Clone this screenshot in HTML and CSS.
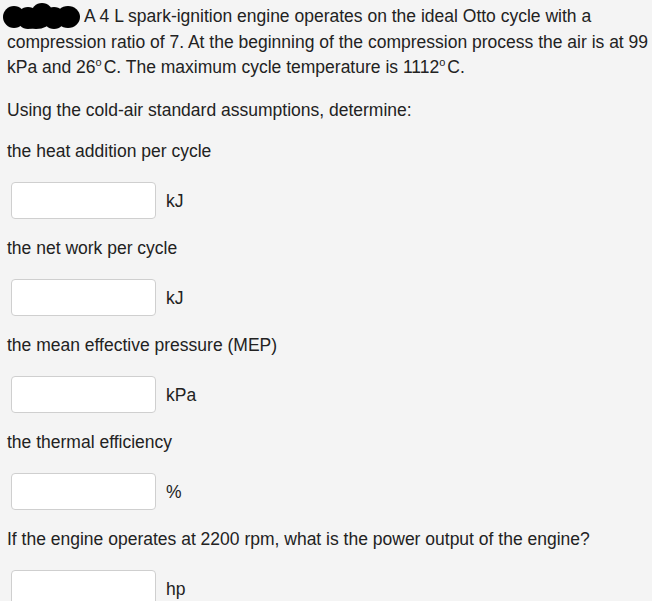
FILE: index.html
```html
<!DOCTYPE html>
<html>
<head>
<meta charset="utf-8">
<link rel="stylesheet" href="styles.css">
</head>
<body>
<div class="page">
  <p class="intro"><svg class="blot" width="80" height="28" viewBox="0 0 80 28"><g fill="#000"><ellipse cx="12" cy="15" rx="11" ry="11"/><ellipse cx="26" cy="16" rx="11" ry="11"/><ellipse cx="40" cy="12" rx="11" ry="11"/><ellipse cx="52" cy="16" rx="11" ry="11"/><ellipse cx="66" cy="15" rx="12" ry="11"/><ellipse cx="34" cy="19" rx="14" ry="8"/></g></svg>A 4 L spark-ignition engine operates on the ideal Otto cycle with a<br>compression ratio of 7. At the beginning of the compression process the air is at 99<br>kPa and 26<sup>o</sup>C. The maximum cycle temperature is 1112<sup>o</sup>C.</p>
  <p class="lead">Using the cold-air standard assumptions, determine:</p>

  <p class="label">the heat addition per cycle</p>
  <div class="answer"><input class="box" type="text"><span class="unit">kJ</span></div>

  <p class="label">the net work per cycle</p>
  <div class="answer"><input class="box" type="text"><span class="unit">kJ</span></div>

  <p class="label">the mean effective pressure (MEP)</p>
  <div class="answer"><input class="box" type="text"><span class="unit">kPa</span></div>

  <p class="label">the thermal efficiency</p>
  <div class="answer"><input class="box" type="text"><span class="unit">%</span></div>

  <p class="label">If the engine operates at 2200 rpm, what is the power output of the engine?</p>
  <div class="answer"><input class="box" type="text"><span class="unit">hp</span></div>
</div>
</body>
</html>
```

FILE: styles.css
```css
html, body {
  margin: 0;
  padding: 0;
  background: #f4f4f4;
}
.page {
  font-family: "Liberation Sans", Arial, sans-serif;
  font-size: 17.5px;
  color: #222;
  padding: 2px 0 0 7px;
}
p {
  margin: 0;
  white-space: nowrap;
}
.intro {
  line-height: 25px;
}
.blot {
  vertical-align: -8px;
  margin-left: -5px;
  margin-right: 2px;
}
sup {
  font-size: 11px;
  vertical-align: 7px;
  line-height: 0;
  margin-right: 2px;
}
.lead {
  margin-top: 20px;
  line-height: 20px;
}
.label {
  margin-top: 19px;
  line-height: 20px;
}
.lead + .label {
  margin-top: 21px;
}
.answer {
  display: flex;
  align-items: center;
  gap: 10px;
  margin-top: 21px;
  margin-left: 4px;
}
.box {
  width: 145px;
  height: 37px;
  box-sizing: border-box;
  border: 1px solid #cfcfcf;
  border-radius: 4px;
  background: #fff;
  margin: 0;
  padding: 0;
}
.unit {
  line-height: 20px;
}
```
